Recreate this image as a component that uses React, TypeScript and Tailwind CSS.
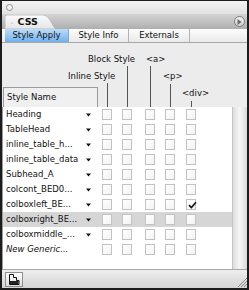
import React from "react";

const rows: { name: string; check?: number; hl?: boolean; italic?: boolean }[] = [
  { name: "Heading" },
  { name: "TableHead" },
  { name: "inline_table_h..." },
  { name: "inline_table_data" },
  { name: "Subhead_A" },
  { name: "colcont_BED0..." },
  { name: "colboxleft_BE...", check: 4 },
  { name: "colboxright_BE...", hl: true },
  { name: "colboxmiddle_..." },
  { name: "New Generic...", italic: true },
];

const colMargins = ["ml-[11px]", "ml-[10px]", "ml-[13px]", "ml-[10px]", "ml-[11px]"];

function Box({ checked }: { checked?: boolean }) {
  return (
    <div className="relative w-[10px] h-[11px] border border-[#c2c2c2] bg-gradient-to-br from-white to-[#f3f3f3] shrink-0">
      {checked && (
        <svg className="absolute left-[1px] top-[1px]" width="9" height="8" viewBox="0 0 9 8">
          <path d="M1 4.2 L3.4 6.5 L8 1.2" stroke="#111" strokeWidth="1.6" fill="none" />
        </svg>
      )}
    </div>
  );
}

function Arrow() {
  return (
    <svg width="5" height="4" viewBox="0 0 5 4" className="shrink-0">
      <path d="M0 0.5 L5 0.5 L2.5 3.5 Z" fill="#111" />
    </svg>
  );
}

export default function App() {
  return (
    <div
      className="w-[249px] h-[290px] flex flex-col border-x-2 border-b-2 border-t border-[#1c1c1c] bg-[#ececec] text-[8.5px] text-[#111] overflow-hidden"
      style={{ fontFamily: '"DejaVu Sans", sans-serif' }}
    >
      {/* title bar */}
      <div className="h-[13px] flex items-center bg-gradient-to-b from-[#f2f2f2] to-[#e2e2e2]">
        <div className="ml-[4px] w-[7px] h-[7px] rounded-full border border-[#8c8c8c] bg-[#f4f4f4]" />
      </div>

      {/* panel tab bar */}
      <div className="h-[15px] flex items-end justify-between bg-gradient-to-b from-[#d4d4d4] to-[#aeaeae]">
        <div className="relative ml-[3px] w-[52px] h-[14px] flex items-center">
          <svg className="absolute inset-0" width="52" height="14" viewBox="0 0 52 14">
            <defs>
              <linearGradient id="tabg" x1="0" y1="0" x2="0" y2="1">
                <stop offset="0" stopColor="#fbfbfb" />
                <stop offset="1" stopColor="#e6e6e6" />
              </linearGradient>
            </defs>
            <path d="M0 14 L0 2 Q0 0 2 0 L38 0 Q42 0 45 5 L49 12 Q50 14 52 14 Z" fill="url(#tabg)" stroke="#a4a4a4" strokeWidth="0.6" />
          </svg>
          <span className="relative ml-[5px] text-[6px] text-[#777]">◦</span>
          <span className="relative ml-[4px] text-[9.5px] font-bold">CSS</span>
        </div>
        <div className="mr-[2px] mb-[2px] w-[11px] h-[11px] rounded-full border border-[#7c7c7c] bg-gradient-to-b from-[#f2f2f2] to-[#d0d0d0] flex items-center justify-center">
          <svg width="5" height="6" viewBox="0 0 5 6">
            <path d="M0.5 0 L4.5 3 L0.5 6 Z" fill="#6a6a6a" />
          </svg>
        </div>
      </div>

      {/* sub tabs */}
      <div className="h-[14px] flex border-b border-[#a8a8a8] bg-gradient-to-b from-[#fdfdfd] to-[#e9e9e9]">
        <div className="w-[3px]" />
        <div className="w-[64px] flex items-center justify-center bg-gradient-to-b from-[#bcdcf8] to-[#6fb1ee] border-r border-[#8aa9c7]">
          Style Apply
        </div>
        <div className="w-[60px] flex items-center justify-center border-r border-[#b4b4b4]">Style Info</div>
        <div className="w-[61px] flex items-center justify-center border-r border-[#b4b4b4]">Externals</div>
        <div className="flex-1" />
      </div>

      {/* header */}
      <div className="relative h-[64px] flex flex-col pt-[11px] bg-[#ececec]">
        <svg className="absolute left-0 top-0 pointer-events-none" width="245" height="64" viewBox="0 0 245 64">
          <g stroke="#555" strokeWidth="1">
            <line x1="105.5" y1="40" x2="105.5" y2="64" />
            <line x1="125.5" y1="23" x2="125.5" y2="64" />
            <line x1="148.5" y1="23" x2="148.5" y2="64" />
            <line x1="168.5" y1="41" x2="168.5" y2="64" />
            <line x1="189.5" y1="58" x2="189.5" y2="64" />
          </g>
        </svg>
        <div className="h-[11px] flex items-center pl-[86px]">
          <span className="w-[58px]">Block Style</span>
          <span>&lt;a&gt;</span>
        </div>
        <div className="mt-[6px] h-[11px] flex items-center pl-[66px]">
          <span className="w-[95px]">Inline Style</span>
          <span>&lt;p&gt;</span>
        </div>
        <div className="mt-[5px] h-[20px] flex">
          <div className="ml-[1px] w-[95px] h-[20px] border-l border-t border-r border-[#9a9a9a] bg-[#f0f0f0] flex items-center pl-[3px]">
            Style Name
          </div>
          <span className="ml-[84px] mt-[1px] h-[11px] leading-[11px]">&lt;div&gt;</span>
        </div>
      </div>

      {/* list + scroll strip */}
      <div className="h-[162px] flex">
        <div className="w-[230px] bg-white border-l border-[#9a9a9a] flex flex-col">
          {rows.map((r) => (
            <div key={r.name} className={`h-[15px] flex items-center ${r.hl ? "bg-[#d6d6d6]" : ""}`}>
              <span className={`w-[83px] pl-[3px] whitespace-nowrap overflow-hidden ${r.italic ? "italic" : ""}`}>
                {r.name}
              </span>
              <div className="w-[5px]">{!r.italic && <Arrow />}</div>
              {colMargins.map((m, i) => (
                <div key={i} className={m}>
                  <Box checked={r.check === i} />
                </div>
              ))}
            </div>
          ))}
        </div>
        <div className="flex-1 border-l border-[#c4c4c4] bg-gradient-to-r from-[#dedede] via-[#f6f6f6] to-[#d8d8d8]" />
      </div>

      {/* bottom bar */}
      <div className="flex-1 flex items-end justify-between border-t border-[#a6a6a6] bg-gradient-to-b from-[#eeeeee] to-[#d4d4d4]">
        <div className="ml-[3px] mb-[1px] w-[18px] h-[15px] border border-[#8e8e8e] bg-gradient-to-b from-white to-[#dcdcdc] flex items-center justify-center">
          <svg width="12" height="11" viewBox="0 0 12 11">
            <path d="M1.5 0.5 H5.5 V3.5 H8.5 V6.5 H11 V10.5 H1.5 Z" fill="none" stroke="#111" strokeWidth="1" />
            <rect x="2" y="7" width="8.5" height="3" fill="#222" />
          </svg>
        </div>
        <svg width="11" height="11" viewBox="0 0 11 11" className="mb-[1px]">
          <g stroke="#8a8a8a" strokeWidth="1">
            <line x1="2" y1="11" x2="11" y2="2" />
            <line x1="5" y1="11" x2="11" y2="5" />
            <line x1="8" y1="11" x2="11" y2="8" />
          </g>
        </svg>
      </div>
    </div>
  );
}
